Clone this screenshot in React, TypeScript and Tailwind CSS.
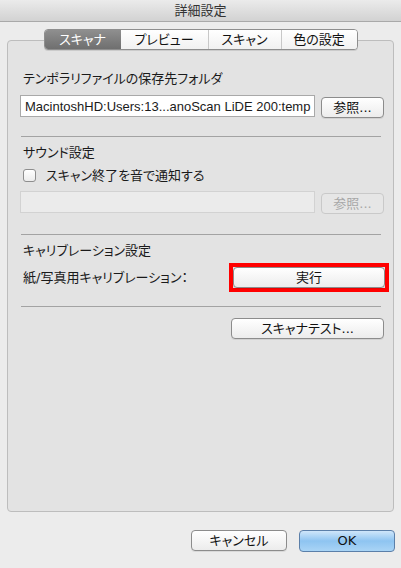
import React from "react";

const jp = "font-['Lucida_Grande','DejaVu_Sans','Noto_Sans_CJK_JP',sans-serif] [font-feature-settings:'palt']";

function MacButton({ label, className = "", disabled = false }: { label: string; className?: string; disabled?: boolean }) {
  return (
    <div
      className={
        "flex h-[21px] shrink-0 items-center justify-center rounded-[4px] border text-[13px] " +
        (disabled
          ? "border-[#c9c9c9] bg-[#e6e6e6] text-[#a8a8a8] "
          : "border-[#8c8c8c] bg-gradient-to-b from-white to-[#ececec] text-[#111] shadow-[0_1px_0_rgba(0,0,0,0.08)] ") +
        className
      }
    >
      {label}
    </div>
  );
}

function Separator() {
  return <div className="ml-[13px] mr-[12px] h-px bg-[#a3a3a3]" />;
}

export default function App() {
  const tabs = ["スキャナ", "プレビュー", "スキャン", "色の設定"];
  const tabWidths = ["w-[76px]", "w-[87px]", "w-[73px]", "w-[76px]"];

  return (
    <div className={"flex h-[568px] w-[401px] flex-col overflow-hidden bg-[#ececec] text-[#1a1a1a] " + jp}>
      {/* title bar */}
      <div className="flex h-[22px] shrink-0 items-center justify-center border-b border-[#a9a9a9] bg-gradient-to-b from-[#ebebeb] to-[#d2d2d2] text-[13px] text-[#333]">
        詳細設定
      </div>

      {/* tabs */}
      <div className="relative z-10 mt-[7px] flex justify-center">
        <div className="flex h-[21px] overflow-hidden rounded-[4px] border border-[#8e8e8e] bg-white shadow-[0_1px_0_rgba(0,0,0,0.1)]">
          {tabs.map((t, i) => (
            <div
              key={t}
              className={
                "flex items-center justify-center text-[13px] " +
                tabWidths[i] +
                (i === 0
                  ? " bg-gradient-to-b from-[#8f8f8f] to-[#6f6f6f] text-white"
                  : " bg-gradient-to-b from-white to-[#f1f1f1] text-[#111]") +
                (i > 1 ? " border-l border-[#c8c8c8]" : "")
              }
            >
              {t}
            </div>
          ))}
        </div>
      </div>

      {/* group box */}
      <div className="mx-[7px] -mt-[10px] flex h-[472px] flex-col rounded-[4px] border border-[#bdbdbd] bg-[#e3e3e3]">
        <div className="mt-[29px] ml-[15px] text-[13px] leading-[17px]">テンポラリファイルの保存先フォルダ</div>
        <div className="mt-[8px] flex items-start pl-[12px] pr-[9px]">
          <div className="flex h-[22px] w-[295px] shrink-0 items-center border border-[#a9a9a9] bg-white pl-[4px] font-['Liberation_Sans',Arial,sans-serif] text-[13px] leading-none whitespace-nowrap">
            MacintoshHD:Users:13...anoScan LiDE 200:temp
          </div>
          <MacButton label="参照..." className="mt-[2px] ml-[6px] w-[63px]" />
        </div>

        <div className="mt-[18px]">
          <Separator />
        </div>

        <div className="mt-[7px] ml-[15px] text-[13px] leading-[17px]">サウンド設定</div>
        <div className="mt-[6px] ml-[15px] flex items-center">
          <div className="h-[13px] w-[13px] rounded-[3px] border border-[#8e8e8e] bg-gradient-to-b from-white to-[#ececec]" />
          <span className="ml-[10px] text-[13px] leading-[17px]">スキャン終了を音で通知する</span>
        </div>
        <div className="mt-[7px] flex items-start pl-[12px] pr-[9px]">
          <div className="h-[22px] w-[295px] shrink-0 border border-[#d2d2d2] bg-[#ebebeb]" />
          <MacButton label="参照..." disabled className="mt-[2px] ml-[6px] w-[63px]" />
        </div>

        <div className="mt-[20px]">
          <Separator />
        </div>

        <div className="mt-[7px] ml-[15px] text-[13px] leading-[17px]">キャリブレーション設定</div>
        <div className="mt-[4px] flex items-center pl-[15px]">
          <span className="text-[13px] leading-[17px]">紙/写真用キャリブレーション：</span>
          <div className="ml-auto mr-[4px] border-[4px] border-[#ff0000] p-0">
            <MacButton label="実行" className="w-[152px]" />
          </div>
        </div>

        <div className="mt-[14px]">
          <Separator />
        </div>

        <div className="mt-[11px] flex justify-end pr-[9px]">
          <MacButton label="スキャナテスト..." className="w-[153px]" />
        </div>
      </div>

      {/* footer buttons */}
      <div className="mt-[18px] flex justify-end gap-[12px] pr-[6px]">
        <MacButton label="キャンセル" className="w-[96px]" />
        <div className="flex h-[22px] w-[96px] items-center justify-center rounded-[4px] border border-[#5b7fa9] bg-gradient-to-b from-[#cfe6fa] via-[#8ec4f1] to-[#a9d4f6] text-[13px] text-[#111]">
          OK
        </div>
      </div>
    </div>
  );
}
